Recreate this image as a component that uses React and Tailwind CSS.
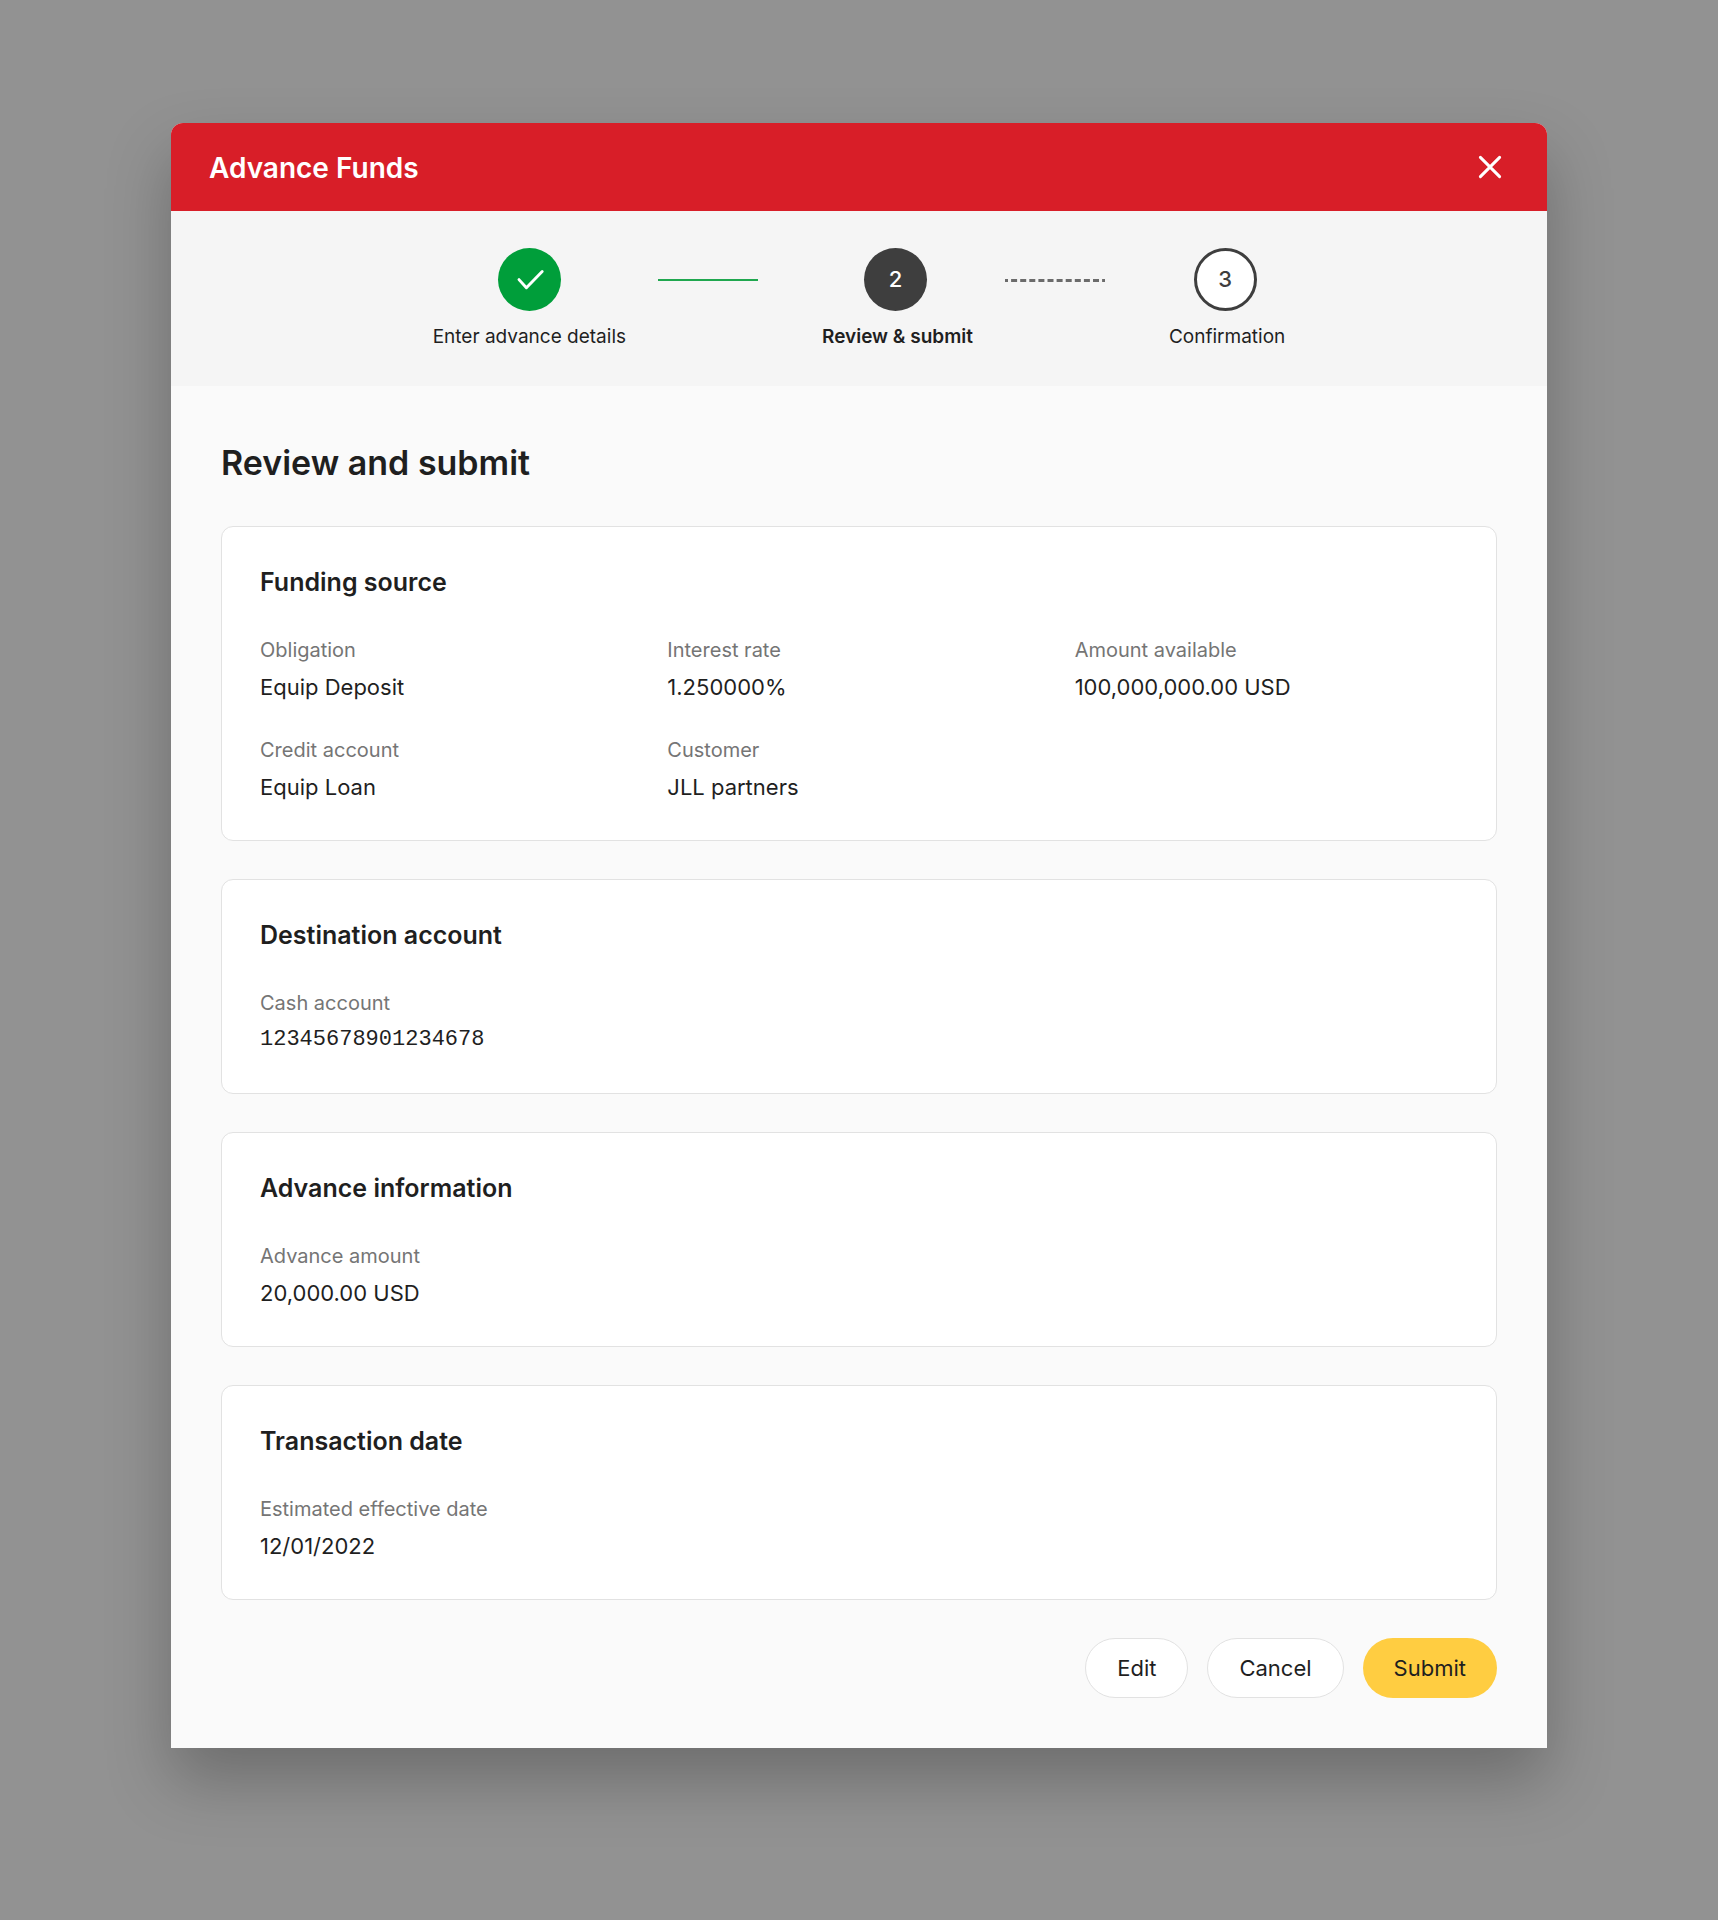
import React from 'react';

const sections = [
    {
        title: 'Funding source',
        fields: [
            { label: 'Obligation', value: 'Equip Deposit' },
            { label: 'Interest rate', value: '1.250000%' },
            { label: 'Amount available', value: '100,000,000.00 USD' },
            { label: 'Credit account', value: 'Equip Loan' },
            { label: 'Customer', value: 'JLL partners' },
        ],
    },
    {
        title: 'Destination account',
        fields: [{ label: 'Cash account', value: '12345678901234678', mono: true }],
    },
    {
        title: 'Advance information',
        fields: [{ label: 'Advance amount', value: '20,000.00 USD' }],
    },
    {
        title: 'Transaction date',
        fields: [{ label: 'Estimated effective date', value: '12/01/2022' }],
    },
];

const CloseIcon = () => (
    <svg viewBox="0 0 24 24" className="w-6 h-6" fill="none" stroke="currentColor" strokeWidth="3" strokeLinecap="round" aria-hidden="true">
        <path d="M2.4 2.4l19.2 19.2M21.6 2.4L2.4 21.6" />
    </svg>
);

const CheckIcon = () => (
    <svg viewBox="0 0 28 28" className="w-7 h-7 overflow-visible" fill="none" stroke="currentColor" strokeWidth="2.9" strokeLinecap="round" strokeLinejoin="round" aria-hidden="true">
        <path d="M4 13.6l7.4 8.2L27.2 5.6" />
    </svg>
);

const circleStyles = {
    done: 'bg-[#009e3a] text-white',
    current: 'bg-[#3e3e3e] text-white',
    upcoming: 'bg-white text-[#3e3e3e] border-[3px] border-[#3e3e3e]',
};

const Step = ({ status, number, label }) => (
    <li className="flex flex-col items-center" aria-current={status === 'current' ? 'step' : undefined}>
        <div className={`w-[63px] h-[63px] rounded-full flex items-center justify-center text-[22px] font-medium ${circleStyles[status]}`}>
            {status === 'done' ? <CheckIcon /> : number}
        </div>
        <span className={`mt-3 text-[19px] leading-7 whitespace-nowrap ${status === 'done' ? '' : 'pl-1'} ${status === 'current' ? 'font-semibold' : ''}`}>
            {label}
        </span>
    </li>
);

const Stepper = () => (
    <ol className="flex justify-center bg-[#f5f5f5] pt-[37px] pb-[35px]">
        <Step status="done" number={1} label="Enter advance details" />
        <li aria-hidden="true" className="ml-8 mr-15 mt-[31px] w-[100px] h-0.5 bg-[#1fa74f]" />
        <Step status="current" number={2} label="Review & submit" />
        <li aria-hidden="true" className="ml-8 mr-15 mt-[31px]">
            <svg width="100" height="3" className="block">
                <line x1="0" y1="1.5" x2="100" y2="1.5" stroke="#6b6b6b" strokeWidth="3" strokeDasharray="6 3.1" strokeDashoffset="3" />
            </svg>
        </li>
        <Step status="upcoming" number={3} label="Confirmation" />
    </ol>
);

const Field = ({ label, value, mono }) => (
    <div className="flex flex-col gap-[5px]">
        <dt className="text-[20px] leading-8 text-[#757575]">{label}</dt>
        <dd className={`text-[22px] leading-8 ${mono ? 'font-["Liberation_Mono",monospace]' : ''}`}>{value}</dd>
    </div>
);

const Card = ({ title, fields }) => (
    <section className="bg-white border border-[#e2e2e2] rounded-xl px-[38px] pt-[39px] pb-[37px]">
        <h3 className="text-[25px] leading-8 font-semibold">{title}</h3>
        <dl className="mt-9 grid grid-cols-3 gap-x-6 gap-y-[31px]">
            {fields.map((field) => (
                <Field key={field.label} {...field} />
            ))}
        </dl>
    </section>
);

const Button = ({ primary, children }) => (
    <button
        type="button"
        className={`h-[60px] px-[31px] rounded-full text-[22px] ${primary ? 'bg-[#ffcd41]' : 'bg-white border border-[#e2e2e2]'}`}
    >
        {children}
    </button>
);

const App = () => {
    return (
        <div className='min-h-screen bg-[#929292] px-10 pt-[123px] pb-[172px] font-["Inter",sans-serif] text-[#1f1f1f]'>
            <div
                role="dialog"
                aria-labelledby="dialog-title"
                className="mx-auto w-full max-w-[1376px] bg-[#fafafa] rounded-t-xl overflow-hidden shadow-[0_32px_64px_rgba(0,0,0,0.25)]"
            >
                <header className="flex items-center justify-between bg-[#d81e28] text-white h-[88px] pl-[38px] pr-[45px]">
                    <h1 id="dialog-title" className="pt-0.5 text-[28px] font-semibold">Advance Funds</h1>
                    <button type="button" aria-label="Close">
                        <CloseIcon />
                    </button>
                </header>

                <Stepper />

                <main className="px-[50px] pt-[54px] pb-[50px]">
                    <h2 className="text-[34px] leading-[46px] font-semibold">Review and submit</h2>
                    <div className="mt-10 flex flex-col gap-[38px]">
                        {sections.map((section) => (
                            <Card key={section.title} {...section} />
                        ))}
                    </div>
                    <div className="mt-[38px] flex justify-end gap-[19px]">
                        <Button>Edit</Button>
                        <Button>Cancel</Button>
                        <Button primary>Submit</Button>
                    </div>
                </main>
            </div>
        </div>
    );
};

export default App;
